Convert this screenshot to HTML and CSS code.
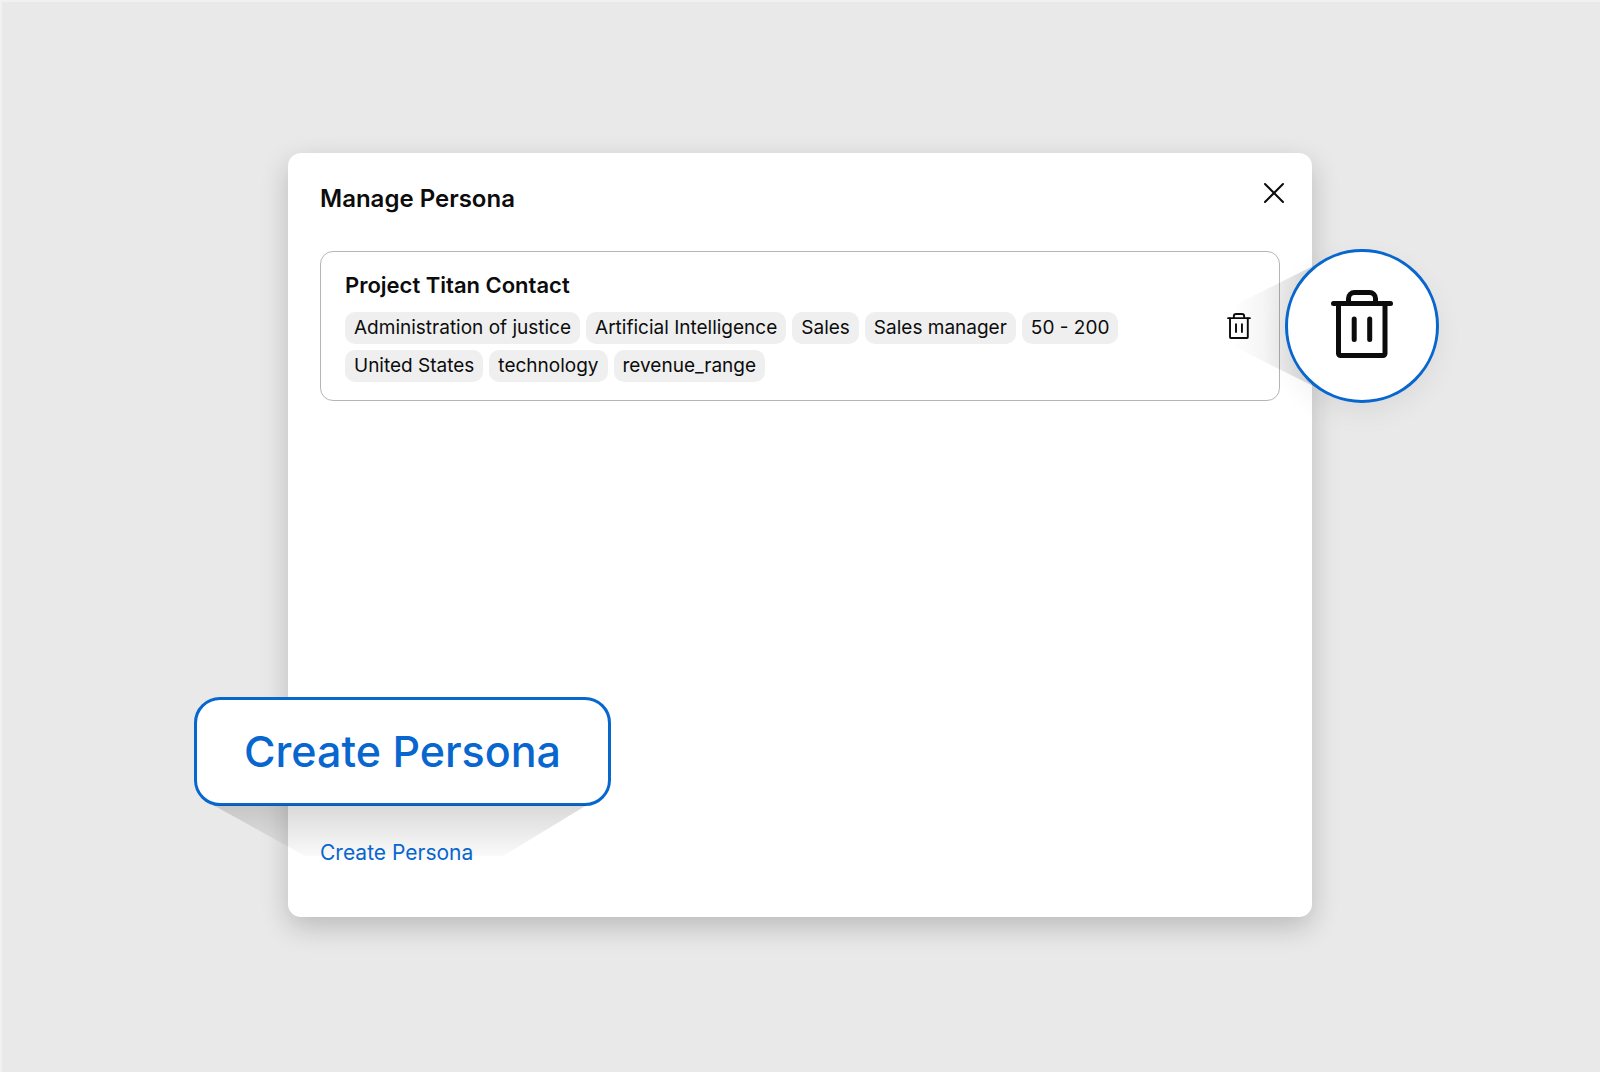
FILE: index.html
```html
<!DOCTYPE html>
<html lang="en">
<head>
  <meta charset="UTF-8">
  <meta name="viewport" content="width=device-width, initial-scale=1.0">
  <title>Manage Persona</title>
  <link rel="stylesheet" href="styles.css">
</head>
<body>
  <svg class="sprite" aria-hidden="true">
    <symbol id="trash" viewBox="0 0 62 68">
      <g fill="none" stroke="currentColor" stroke-width="5" stroke-linecap="round" stroke-linejoin="round">
        <path d="M2.5 13.5H59.5"/>
        <path d="M17.5 13V8.5a6 6 0 0 1 6-6h15a6 6 0 0 1 6 6V13"/>
        <path d="M7.5 14V63.5a2 2 0 0 0 2 2H52a2 2 0 0 0 2-2V14"/>
        <path d="M23.2 29V49.5M38.7 29V49.5"/>
      </g>
    </symbol>
  </svg>

  <main class="modal">
    <header class="modal-header">
      <h1>Manage Persona</h1>
      <button type="button" class="close" aria-label="Close">
        <svg width="22" height="22" viewBox="0 0 22 22"><path d="M2 2L20 20M20 2L2 20"/></svg>
      </button>
    </header>

    <section class="persona">
      <div class="persona-info">
        <h2>Project Titan Contact</h2>
        <ul class="tags">
          <li>Administration of justice</li>
          <li>Artificial Intelligence</li>
          <li>Sales</li>
          <li>Sales manager</li>
          <li>50 - 200</li>
          <li>United States</li>
          <li>technology</li>
          <li>revenue_range</li>
        </ul>
      </div>
      <div class="delete-wrap">
        <svg class="beam-right" viewBox="0 0 100 130" width="100" height="130" aria-hidden="true">
          <defs>
            <linearGradient id="fadeLeft" x1="0" x2="1" y1="0" y2="0">
              <stop offset="0.1" stop-opacity="0"/>
              <stop offset="0.4" stop-opacity="0.04"/>
              <stop offset="1" stop-opacity="0.18"/>
            </linearGradient>
          </defs>
          <path d="M0 50L100 0V130L0 80Z" fill="url(#fadeLeft)"/>
        </svg>
        <button type="button" class="delete" aria-label="Delete persona">
          <svg width="24" height="26"><use href="#trash"/></svg>
        </button>
        <div class="zoom-circle">
          <svg width="62" height="68"><use href="#trash"/></svg>
        </div>
      </div>
    </section>

    <footer class="modal-footer">
      <a href="#" class="zoom-label">Create Persona</a>
      <svg class="beam-down" viewBox="0 0 374 51" width="374" height="51" aria-hidden="true">
        <defs>
          <linearGradient id="fadeDown" x1="0" x2="0" y1="0" y2="1">
            <stop offset="0" stop-opacity="0.15"/>
            <stop offset="1" stop-opacity="0.02"/>
          </linearGradient>
        </defs>
        <path d="M0 0H374L290 51H92Z" fill="url(#fadeDown)"/>
      </svg>
      <a href="#" class="create">Create Persona</a>
    </footer>
  </main>
</body>
</html>
```

FILE: styles.css
```css
* {
  box-sizing: border-box;
}
body {
  font-family: Inter, sans-serif;
  background: #e9e9e9;
  color: #0c0c0c;
  margin: 0;
  min-height: 100vh;
  padding: 153px 0 155px;
  display: flex;
  justify-content: center;
  box-shadow: inset 2px 2px #f1f1f1;
}
h1, h2, ul {
  margin: 0;
  padding: 0;
}
button {
  display: flex;
  align-items: center;
  justify-content: center;
  padding: 0;
  border: none;
  background: none;
  color: inherit;
  cursor: pointer;
}
a {
  color: #0866cf;
  text-decoration: none;
}
.sprite {
  position: absolute;
  width: 0;
  height: 0;
}
.modal {
  width: 64%;
  display: flex;
  flex-direction: column;
  padding: 24px 32px 48px;
  background: white;
  border-radius: 13px;
  box-shadow: 0 10px 28px rgba(0,0,0,0.2);
}
.modal-header {
  display: flex;
  justify-content: space-between;
  margin-bottom: 30px;
}
h1 {
  font-size: 24px;
  line-height: 44px;
  font-weight: 600;
}
.close {
  width: 32px;
  height: 32px;
  margin-right: -10px;
}
.close path {
  stroke: #0c0c0c;
  stroke-width: 2;
  stroke-linecap: round;
}
.persona {
  display: flex;
  align-items: center;
  justify-content: space-between;
  padding: 18px 24px;
  border: 1px solid #b5b5b5;
  border-radius: 13px;
}
h2 {
  font-size: 22px;
  line-height: 30px;
  font-weight: 600;
  margin-bottom: 12px;
}
.persona-info {
  flex: 1;
  max-width: 800px;
}
.tags {
  display: flex;
  flex-wrap: wrap;
  gap: 6px;
  list-style: none;
}
.tags li {
  padding: 0 9px;
  font-size: 19px;
  line-height: 32px;
  background: #efefef;
  border-radius: 10px;
}
.delete-wrap {
  position: relative;
}
.delete {
  position: relative;
  width: 32px;
  height: 32px;
}
.beam-right {
  position: absolute;
  top: -49px;
  left: 0;
}
.zoom-circle {
  position: absolute;
  top: -61px;
  left: 62px;
  width: 154px;
  height: 154px;
  display: flex;
  align-items: center;
  justify-content: center;
  padding-bottom: 4px;
  background: white;
  border: 3px solid #0866cf;
  border-radius: 50%;
  box-shadow: 0 10px 28px rgba(0,0,0,0.06);
}
.modal-footer {
  position: relative;
  margin-top: auto;
}
.create {
  position: relative;
  font-size: 21px;
  line-height: 32px;
}
.zoom-label {
  position: absolute;
  bottom: 63px;
  left: -126px;
  padding: 0 47px;
  font-size: 43px;
  line-height: 103px;
  font-weight: 500;
  white-space: nowrap;
  background: white;
  border: 3px solid #0866cf;
  border-radius: 26px;
}
.beam-down {
  position: absolute;
  bottom: 13px;
  left: -107px;
}
```
